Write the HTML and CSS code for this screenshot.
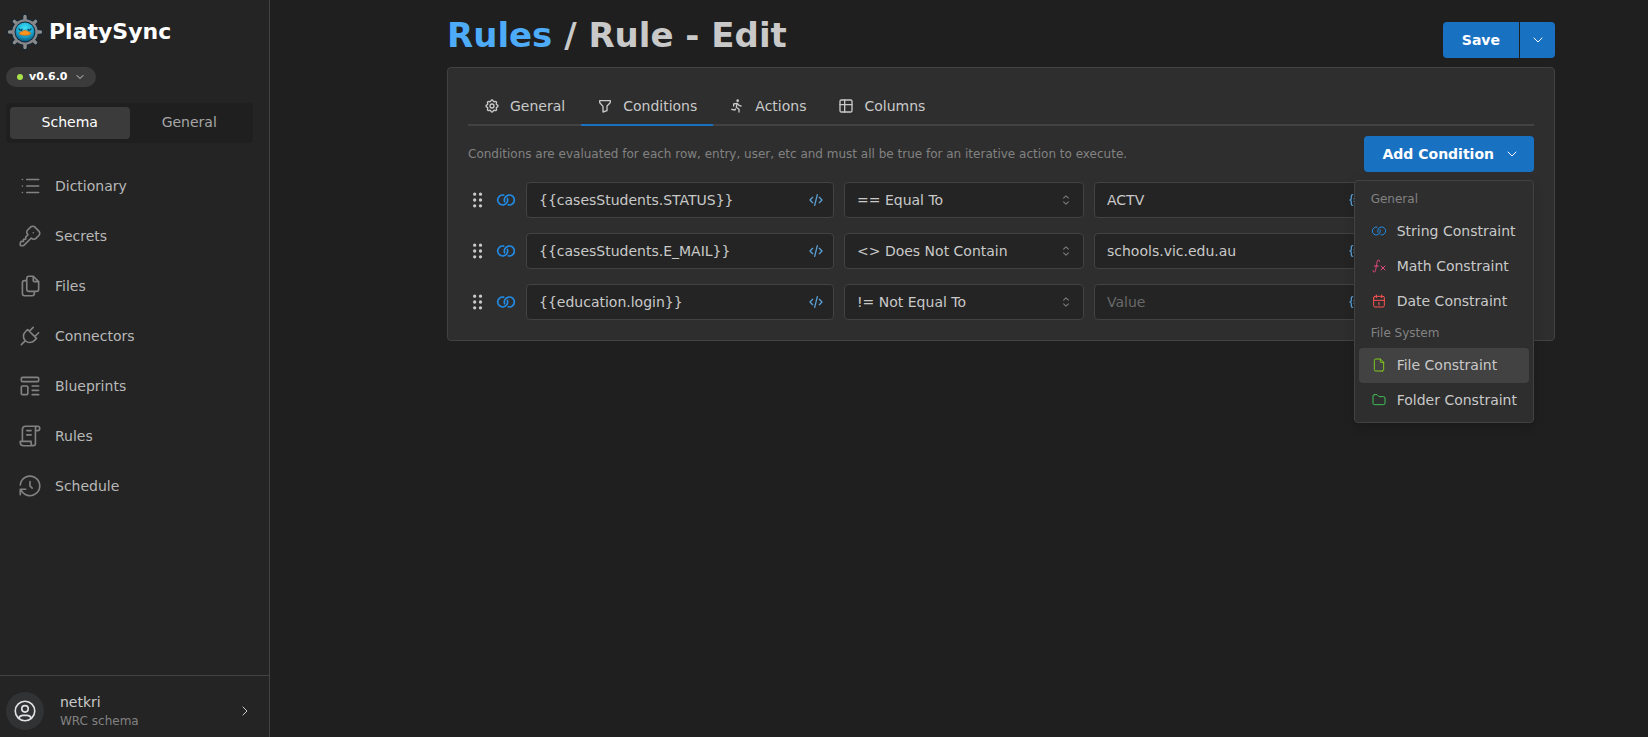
FILE: index.html
```html
<!DOCTYPE html>
<html lang="en">
<head>
<meta charset="utf-8">
<meta name="viewport" content="width=device-width, initial-scale=1">
<title>PlatySync - Rule Edit</title>
<link rel="stylesheet" href="styles.css">
</head>
<body>
<svg class="sprite" aria-hidden="true">
  <symbol id="i-list" viewBox="0 0 24 24"><path d="M9 6h11M9 12h11M9 18h11M5 6v.01M5 12v.01M5 18v.01"/></symbol>
  <symbol id="i-key" viewBox="0 0 24 24"><path d="M16.555 3.843l3.602 3.602a2.877 2.877 0 0 1 0 4.069l-2.643 2.643a2.877 2.877 0 0 1 -4.069 0l-.301 -.301l-6.558 6.558a2 2 0 0 1 -1.239 .578l-.175 .008h-1.172a1 1 0 0 1 -.993 -.883l-.007 -.117v-1.172a2 2 0 0 1 .467 -1.284l.119 -.13l.414 -.414h2v-2h2v-2l2.144 -2.144l-.301 -.301a2.877 2.877 0 0 1 0 -4.069l2.643 -2.643a2.877 2.877 0 0 1 4.069 0zM15 9h.01"/></symbol>
  <symbol id="i-files" viewBox="0 0 24 24"><path d="M15 3v4a1 1 0 0 0 1 1h4M18 17h-7a2 2 0 0 1 -2 -2v-10a2 2 0 0 1 2 -2h4l5 5v7a2 2 0 0 1 -2 2zM16 17v2a2 2 0 0 1 -2 2h-7a2 2 0 0 1 -2 -2v-10a2 2 0 0 1 2 -2h2"/></symbol>
  <symbol id="i-plug" viewBox="0 0 24 24"><path d="M9.785 6l8.215 8.215l-2.054 2.054a5.81 5.81 0 1 1 -8.215 -8.215l2.054 -2.054zM4 20l3.5 -3.5M15 4l-3.5 3.5M20 9l-3.5 3.5"/></symbol>
  <symbol id="i-template" viewBox="0 0 24 24"><rect x="4" y="4" width="16" height="4" rx="1"/><rect x="4" y="12" width="6" height="8" rx="1"/><path d="M14 12h6M14 16h6M14 20h6"/></symbol>
  <symbol id="i-license" viewBox="0 0 24 24"><path d="M15 21h-9a3 3 0 0 1 -3 -3v-1h10v2a2 2 0 0 0 4 0v-14a2 2 0 1 1 2 2h-2m2 -4h-11a3 3 0 0 0 -3 3v11M9 7h4M9 11h4"/></symbol>
  <symbol id="i-history" viewBox="0 0 24 24"><path d="M12 8v4l2 2M3.05 11a9 9 0 1 1 .5 4m-.5 5v-5h5"/></symbol>
  <symbol id="i-user" viewBox="0 0 24 24"><circle cx="12" cy="12" r="9"/><circle cx="12" cy="10" r="3"/><path d="M6.168 18.849a4 4 0 0 1 3.832 -2.849h4a4 4 0 0 1 3.834 2.855"/></symbol>
  <symbol id="i-right" viewBox="0 0 24 24"><path d="M9 6l6 6l-6 6"/></symbol>
  <symbol id="i-down" viewBox="0 0 24 24"><path d="M6 9l6 6l6 -6"/></symbol>
  <symbol id="i-settings" viewBox="0 0 24 24"><path d="M10.325 4.317c.426 -1.756 2.924 -1.756 3.35 0a1.724 1.724 0 0 0 2.573 1.066c1.543 -.94 3.31 .826 2.37 2.37a1.724 1.724 0 0 0 1.065 2.572c1.756 .426 1.756 2.924 0 3.35a1.724 1.724 0 0 0 -1.066 2.573c.94 1.543 -.826 3.31 -2.37 2.37a1.724 1.724 0 0 0 -2.572 1.065c-.426 1.756 -2.924 1.756 -3.35 0a1.724 1.724 0 0 0 -2.573 -1.066c-1.543 .94 -3.31 -.826 -2.37 -2.37a1.724 1.724 0 0 0 -1.065 -2.572c-1.756 -.426 -1.756 -2.924 0 -3.35a1.724 1.724 0 0 0 1.066 -2.573c-.94 -1.543 .826 -3.31 2.37 -2.37c1 .608 2.296 .07 2.572 -1.065z"/><circle cx="12" cy="12" r="3"/></symbol>
  <symbol id="i-filter" viewBox="0 0 24 24"><path d="M4 4h16v2.172a2 2 0 0 1 -.586 1.414l-4.414 4.414v7l-6 2v-8.5l-4.48 -4.928a2 2 0 0 1 -.52 -1.345v-2.227z"/></symbol>
  <symbol id="i-run" viewBox="0 0 24 24"><circle cx="13" cy="4" r="1"/><path d="M4 17l5 1l.75 -1.5M15 21v-4l-4 -3l1 -6M7 12v-3l5 -1l3 3l3 1"/></symbol>
  <symbol id="i-table" viewBox="0 0 24 24"><rect x="3" y="3" width="18" height="18" rx="2"/><path d="M3 10h18M10 3v18"/></symbol>
  <symbol id="i-grip" viewBox="0 0 24 24"><g fill="currentColor"><circle cx="8" cy="5" r="1"/><circle cx="8" cy="12" r="1"/><circle cx="8" cy="19" r="1"/><circle cx="15" cy="5" r="1"/><circle cx="15" cy="12" r="1"/><circle cx="15" cy="19" r="1"/></g></symbol>
  <symbol id="i-relation" viewBox="0 0 24 24"><path d="M9.183 6.117a6 6 0 1 0 4.511 3.986M14.813 17.883a6 6 0 1 0 -4.496 -3.954"/></symbol>
  <symbol id="i-code" viewBox="0 0 24 24"><path d="M7 8l-4 4l4 4M17 8l4 4l-4 4M14 4l-4 16"/></symbol>
  <symbol id="i-braces" viewBox="0 0 24 24"><path d="M7 4a2 2 0 0 0 -2 2v3a2 3 0 0 1 -2 3a2 3 0 0 1 2 3v3a2 2 0 0 0 2 2M17 4a2 2 0 0 1 2 2v3a2 3 0 0 0 2 3a2 3 0 0 0 -2 3v3a2 2 0 0 1 -2 2M9 10h6M9 14h6"/></symbol>
  <symbol id="i-function" viewBox="0 0 24 24"><path d="M3 19a2 2 0 0 0 2 2c2 0 2 -4 3 -9s1 -9 3 -9a2 2 0 0 1 2 2M5 12h6M15 12l6 6M15 18l6 -6"/></symbol>
  <symbol id="i-calendar" viewBox="0 0 24 24"><path d="M4 7a2 2 0 0 1 2 -2h12a2 2 0 0 1 2 2v12a2 2 0 0 1 -2 2h-12a2 2 0 0 1 -2 -2v-12zM16 3v4M8 3v4M4 11h16M11 15h1M12 15v3"/></symbol>
  <symbol id="i-file" viewBox="0 0 24 24"><path d="M14 3v4a1 1 0 0 0 1 1h4M17 21h-10a2 2 0 0 1 -2 -2v-14a2 2 0 0 1 2 -2h7l5 5v11a2 2 0 0 1 -2 2z"/></symbol>
  <symbol id="i-folder" viewBox="0 0 24 24"><path d="M5 4h4l3 3h7a2 2 0 0 1 2 2v8a2 2 0 0 1 -2 2h-14a2 2 0 0 1 -2 -2v-11a2 2 0 0 1 2 -2"/></symbol>
  <symbol id="i-selector" viewBox="0 0 15 15"><path stroke="none" fill="currentColor" d="M4.932 5.432a.45.45 0 0 0 .636.636L7.5 4.136l1.932 1.932a.45.45 0 0 0 .636-.636l-2.25-2.25a.45.45 0 0 0-.636 0zM10.068 9.568a.45.45 0 0 0-.636-.636L7.5 10.864 5.568 8.932a.45.45 0 0 0-.636.636l2.25 2.25a.45.45 0 0 0 .636 0z"/></symbol>
</svg>

<div class="app">
  <aside class="sidebar">
    <div class="brand">
      <svg class="brand-logo" viewBox="0 0 36 36" aria-hidden="true">
        <defs>
          <radialGradient id="ball" cx="0.5" cy="0.3" r="0.7"><stop offset="0" stop-color="#3fe0f5"/><stop offset="0.6" stop-color="#1aa9d2"/><stop offset="1" stop-color="#0a5a80"/></radialGradient>
        </defs>
        <g stroke="#10263a" stroke-width="5" stroke-linecap="round"><path d="M18 2.500v31M2.500 18h31M7.400 7.400l21.200 21.200M28.600 7.400l-21.200 21.200"/></g>
        <circle cx="18" cy="18" r="13.500" fill="#10263a"/>
        <g stroke="#8b8b88" stroke-width="3.400" stroke-linecap="round"><path d="M18 2.500v31M2.500 18h31M7.400 7.400l21.200 21.200M28.600 7.400l-21.200 21.200"/></g>
        <circle cx="18" cy="18" r="12.800" fill="#85868a"/>
        <circle cx="18" cy="18" r="10.400" fill="#0c2638"/>
        <circle cx="18" cy="18" r="9.500" fill="url(#ball)"/>
        <path d="M12 14.800a1.600 1.600 0 0 0 3 .6M24 14.800a1.600 1.600 0 0 1-3 .6" fill="none" stroke="#083a50" stroke-width="1.200" stroke-linecap="round"/>
        <path d="M12.200 19.200c0-1.200 2.600-1.300 3.600-2.200 1.100-1 3.300-1 4.400 0 1 .9 3.600 1 3.600 2.200 0 1.500-2.800 2.200-5.800 2.200s-5.800-.7-5.800-2.200z" fill="#ff951f" stroke="#a04c10" stroke-width="0.500"/>
      </svg>
      <span class="brand-name">PlatySync</span>
    </div>
    <button class="version" type="button"><span class="dot"></span>v0.6.0<svg class="icon icon-12"><use href="#i-down"/></svg></button>
    <div class="segmented" role="radiogroup" aria-label="Scope">
      <label class="segment"><input type="radio" name="scope" checked><span>Schema</span></label>
      <label class="segment"><input type="radio" name="scope"><span>General</span></label>
    </div>
    <nav class="nav">
      <a class="nav-link" href="#"><svg class="icon icon-26"><use href="#i-list"/></svg>Dictionary</a>
      <a class="nav-link" href="#"><svg class="icon icon-26"><use href="#i-key"/></svg>Secrets</a>
      <a class="nav-link" href="#"><svg class="icon icon-26"><use href="#i-files"/></svg>Files</a>
      <a class="nav-link" href="#"><svg class="icon icon-26"><use href="#i-plug"/></svg>Connectors</a>
      <a class="nav-link" href="#"><svg class="icon icon-26"><use href="#i-template"/></svg>Blueprints</a>
      <a class="nav-link" href="#"><svg class="icon icon-26"><use href="#i-license"/></svg>Rules</a>
      <a class="nav-link" href="#"><svg class="icon icon-26"><use href="#i-history"/></svg>Schedule</a>
    </nav>
    <button class="user" type="button">
      <span class="avatar"><svg class="icon icon-26"><use href="#i-user"/></svg></span>
      <span class="user-text"><span class="user-name">netkri</span><span class="user-schema">WRC schema</span></span>
      <svg class="icon icon-16"><use href="#i-right"/></svg>
    </button>
  </aside>

  <main class="main">
    <div class="container">
      <header class="page-head">
        <h1 class="title"><a href="#">Rules</a> / Rule - Edit</h1>
        <div class="split">
          <button class="btn btn-save" type="button">Save</button>
          <button class="btn btn-more" type="button" aria-label="More save options"><svg class="icon icon-16"><use href="#i-down"/></svg></button>
        </div>
      </header>

      <section class="card">
        <div class="tabs" role="tablist">
          <button class="tab" type="button" role="tab"><svg class="icon icon-16 bold"><use href="#i-settings"/></svg>General</button>
          <button class="tab active" type="button" role="tab" aria-selected="true"><svg class="icon icon-16 bold"><use href="#i-filter"/></svg>Conditions</button>
          <button class="tab" type="button" role="tab"><svg class="icon icon-16 bold"><use href="#i-run"/></svg>Actions</button>
          <button class="tab" type="button" role="tab"><svg class="icon icon-16 bold"><use href="#i-table"/></svg>Columns</button>
        </div>

        <div class="toolbar">
          <p class="hint">Conditions are evaluated for each row, entry, user, etc and must all be true for an iterative action to execute.</p>
          <div class="dropdown">
            <button class="btn btn-add" type="button" aria-haspopup="menu" aria-expanded="true">Add Condition<svg class="icon icon-16"><use href="#i-down"/></svg></button>
            <div class="menu" role="menu">
              <div class="menu-label">General</div>
              <button class="menu-item" type="button" role="menuitem"><svg class="icon icon-16 blue"><use href="#i-relation"/></svg>String Constraint</button>
              <button class="menu-item" type="button" role="menuitem"><svg class="icon icon-16 pink"><use href="#i-function"/></svg>Math Constraint</button>
              <button class="menu-item" type="button" role="menuitem"><svg class="icon icon-16 red"><use href="#i-calendar"/></svg>Date Constraint</button>
              <div class="menu-label">File System</div>
              <button class="menu-item hovered" type="button" role="menuitem"><svg class="icon icon-16 lime"><use href="#i-file"/></svg>File Constraint</button>
              <button class="menu-item" type="button" role="menuitem"><svg class="icon icon-16 green"><use href="#i-folder"/></svg>Folder Constraint</button>
            </div>
          </div>
        </div>

        <div class="rows">
          <div class="row">
            <div class="lead"><svg class="icon icon-20 bold"><use href="#i-grip"/></svg><svg class="icon icon-20 bold blue"><use href="#i-relation"/></svg></div>
            <div class="field grow"><input type="text" aria-label="Key" value="{{casesStudents.STATUS}}"><svg class="icon icon-16 bold field-icon sky"><use href="#i-code"/></svg></div>
            <div class="field operator"><select aria-label="Operator"><option>== Equal To</option></select><svg class="icon icon-16 field-icon gray"><use href="#i-selector"/></svg></div>
            <div class="field grow value"><input type="text" aria-label="Value" placeholder="Value" value="ACTV"><svg class="icon icon-16 bold field-icon sky"><use href="#i-braces"/></svg></div>
          </div>
          <div class="row">
            <div class="lead"><svg class="icon icon-20 bold"><use href="#i-grip"/></svg><svg class="icon icon-20 bold blue"><use href="#i-relation"/></svg></div>
            <div class="field grow"><input type="text" aria-label="Key" value="{{casesStudents.E_MAIL}}"><svg class="icon icon-16 bold field-icon sky"><use href="#i-code"/></svg></div>
            <div class="field operator"><select aria-label="Operator"><option>&lt;&gt; Does Not Contain</option></select><svg class="icon icon-16 field-icon gray"><use href="#i-selector"/></svg></div>
            <div class="field grow value"><input type="text" aria-label="Value" placeholder="Value" value="schools.vic.edu.au"><svg class="icon icon-16 bold field-icon sky"><use href="#i-braces"/></svg></div>
          </div>
          <div class="row">
            <div class="lead"><svg class="icon icon-20 bold"><use href="#i-grip"/></svg><svg class="icon icon-20 bold blue"><use href="#i-relation"/></svg></div>
            <div class="field grow"><input type="text" aria-label="Key" value="{{education.login}}"><svg class="icon icon-16 bold field-icon sky"><use href="#i-code"/></svg></div>
            <div class="field operator"><select aria-label="Operator"><option>!= Not Equal To</option></select><svg class="icon icon-16 field-icon gray"><use href="#i-selector"/></svg></div>
            <div class="field grow value"><input type="text" aria-label="Value" placeholder="Value"><svg class="icon icon-16 bold field-icon sky"><use href="#i-braces"/></svg></div>
          </div>
        </div>
      </section>
    </div>
  </main>
</div>
</body>
</html>
```
FILE: styles.css
```css
*, *::before, *::after { box-sizing: border-box; }

body {
  margin: 0;
  background: #1f1f1f;
  color: #c9c9c9;
  font-family: "DejaVu Sans", sans-serif;
  font-size: 14px;
  line-height: 22px;
}

button, input, select { font: inherit; color: inherit; }
button { border: 0; background: none; cursor: pointer; }
a { color: inherit; text-decoration: none; }

.sprite { display: none; }

.icon {
  flex: none;
  fill: none;
  stroke: currentColor;
  stroke-width: 1.5;
  stroke-linecap: round;
  stroke-linejoin: round;
}
.icon.bold { stroke-width: 2; }
.icon-12 { width: 12px; height: 12px; }
.icon-16 { width: 16px; height: 16px; }
.icon-20 { width: 20px; height: 20px; }
.icon-26 { width: 26px; height: 26px; }

.blue { color: #228be6; }
.sky { color: #5a9fd4; }
.pink { color: #e64980; }
.red { color: #fa5252; }
.lime { color: #82c91e; }
.green { color: #40c057; }
.gray { color: #828282; }

.app { display: flex; min-height: 100vh; }

/* Sidebar */
.sidebar {
  display: flex;
  flex: none;
  flex-direction: column;
  width: 270px;
  padding-top: 14px;
  background: #242424;
  border-right: 1px solid #424242;
}
.brand { display: flex; align-items: center; gap: 6px; padding-left: 7px; }
.brand-logo { width: 36px; height: 36px; }
.brand-name { color: #fff; font-size: 22px; font-weight: 700; line-height: 36px; }

.version {
  display: flex;
  align-items: center;
  align-self: flex-start;
  gap: 6px;
  height: 20px;
  margin: 17px 0 16px 6px;
  padding: 0 10px 0 11px;
  border-radius: 10px;
  background: #3b3b3b;
  color: #fff;
  font-size: 11px;
  font-weight: 700;
  line-height: 20px;
}
.dot { width: 6px; height: 6px; border-radius: 50%; background: #a9e34b; }

.segmented {
  display: flex;
  margin: 0 16px 18px 6px;
  padding: 4px;
  border-radius: 4px;
  background: #1f1f1f;
}
.segment { position: relative; flex: 1; color: #a6a6a6; text-align: center; cursor: pointer; }
.segment input { position: absolute; opacity: 0; margin: 0; }
.segment span { display: block; padding-bottom: 2px; border-radius: 4px; line-height: 30px; }
.segment input:checked + span { background: #3b3b3b; color: #fff; }

.nav { flex: 1; }
.nav-link {
  display: flex;
  align-items: center;
  gap: 12px;
  height: 50px;
  padding-left: 17px;
  color: #b8b8b8;
}
.nav-link .icon { color: #828282; }

.user {
  display: flex;
  align-items: center;
  gap: 16px;
  padding: 16px 16px 7px 6px;
  border-top: 1px solid #424242;
  text-align: left;
}
.avatar {
  display: grid;
  place-items: center;
  width: 38px;
  height: 38px;
  border-radius: 50%;
  background: #303234;
  color: #e0e2e4;
}
.user-text { display: flex; flex: 1; flex-direction: column; }
.user-name { line-height: 20px; }
.user-schema { color: #828282; font-size: 12px; line-height: 18px; }

/* Page */
.main { flex: 1; min-width: 0; padding-left: 84px; }
.container { max-width: 1140px; margin: 0 auto; padding: 13px 16px; }
.page-head { display: flex; align-items: flex-start; justify-content: space-between; margin-bottom: 9px; }
.title { margin: 0; font-size: 34px; line-height: 45px; }
.title a { color: #4dabf7; }

.btn {
  display: flex;
  align-items: center;
  justify-content: center;
  height: 36px;
  border-radius: 4px;
  background: #1971c2;
  color: #fff;
  font-weight: 700;
}
.split { display: flex; gap: 1px; padding-top: 9px; }
.btn-save { padding: 0 19px; border-radius: 4px 0 0 4px; }
.btn-more { width: 35px; padding: 0; border-radius: 0 4px 4px 0; }
.btn-add { gap: 10px; padding: 0 14px 0 18px; white-space: nowrap; }

.card {
  padding: 20px;
  border: 1px solid #424242;
  border-radius: 4px;
  background: #2e2e2e;
}

.tabs { display: flex; box-shadow: inset 0 -2px #424242; }
.tab {
  display: flex;
  align-items: center;
  gap: 10px;
  padding: 10px 16px;
  border-bottom: 2px solid transparent;
  line-height: 16px;
}
.tab.active { border-bottom-color: #1971c2; }

.toolbar { display: flex; align-items: center; justify-content: space-between; gap: 16px; padding: 10px 0; }
.hint { margin: 0; color: #828282; font-size: 12px; line-height: 18px; }

.dropdown { position: relative; }
.menu {
  position: absolute;
  top: 44px;
  right: 0;
  z-index: 2;
  padding: 4px;
  border: 1px solid #424242;
  border-radius: 4px;
  background: #2e2e2e;
  box-shadow: 0 4px 12px rgba(0, 0, 0, 0.15);
}
.menu-label { padding: 5px 12px; color: #828282; font-size: 12px; line-height: 19px; }
.menu-item {
  display: flex;
  align-items: center;
  gap: 10px;
  width: 100%;
  height: 35px;
  padding: 0 12px 2px;
  border-radius: 4px;
  white-space: nowrap;
}
.menu-item.hovered { background: #424242; }

.rows { display: flex; flex-direction: column; gap: 15px; }
.row { display: flex; align-items: center; gap: 10px; padding-right: 132px; }
.lead { display: flex; flex: none; gap: 8px; }

.field { position: relative; flex: none; height: 36px; }
.field.grow { flex: 1; min-width: 0; }
.field.operator { width: 240px; }
.field input, .field select {
  width: 100%;
  height: 100%;
  padding: 0 36px 0 12px;
  border: 1px solid #424242;
  border-radius: 4px;
  background: #242424;
  appearance: none;
  outline: 0;
}
.field input::placeholder { color: #696969; opacity: 1; }
.field-icon { position: absolute; top: 10px; right: 10px; pointer-events: none; }
.field.value .field-icon { right: 38px; }
```
